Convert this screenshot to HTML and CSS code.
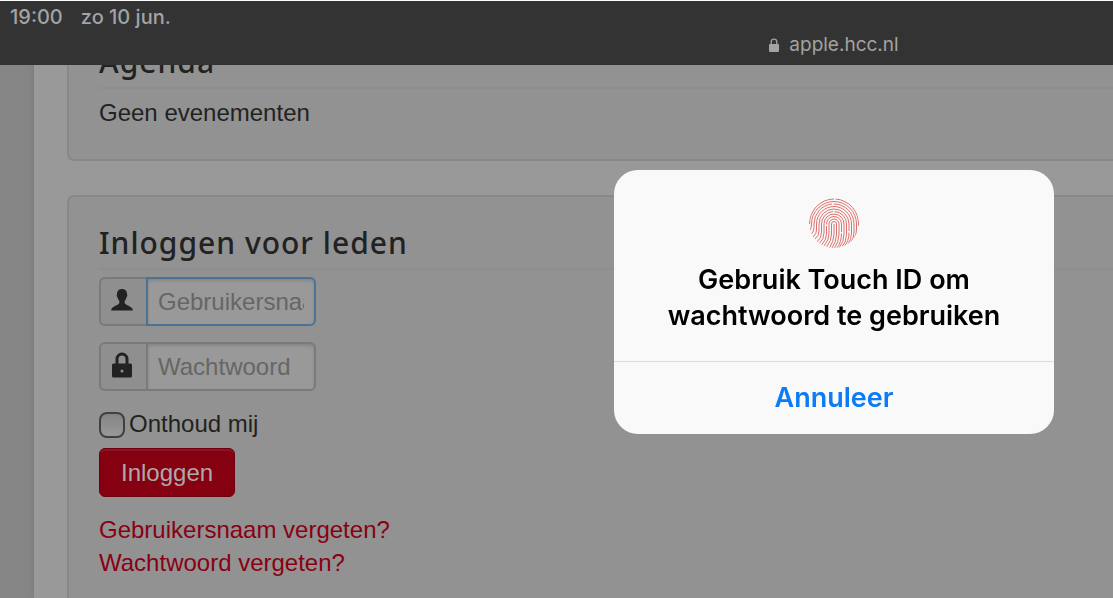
FILE: index.html
```html
<!DOCTYPE html>
<html lang="nl">
<head>
<meta charset="utf-8">
<meta name="viewport" content="width=device-width, initial-scale=1">
<title>Inloggen voor leden</title>
<link rel="stylesheet" href="styles.css">
</head>
<body>
<header class="topbar">
  <div class="status"><time>19:00</time><span>zo 10 jun.</span></div>
  <div class="address">
    <svg class="address-lock" viewBox="0 0 10 14" aria-hidden="true"><path d="M2.200 7V4a2.800 2.800 0 0 1 5.600 0v3" fill="none" stroke="currentColor" stroke-width="1.300"/><rect y="6" width="10" height="8" rx="1" fill="currentColor"/></svg>
    <span>apple.hcc.nl</span>
  </div>
</header>

<main class="page">
  <section class="panel">
    <h2 class="panel-title">Agenda</h2>
    <p class="text">Geen evenementen</p>
  </section>

  <section class="panel">
    <h2 class="panel-title">Inloggen voor leden</h2>
    <form class="login">
      <div class="field">
        <label class="addon" for="user" aria-label="Gebruikersnaam">
          <svg class="icon" viewBox="0 0 22 22" aria-hidden="true"><path d="M11 0C8 0 6 1.800 6 4.800c0 .8-.4 1-.3 1.800.1 1 .7 1.300.9 2.200.3 1.300.9 2.200 1.700 3v2.300C7.800 16.500 1 16.800 0 21.500h22c-1-4.700-7.800-5-8.300-7.400v-2.300c.8-.8 1.400-1.700 1.700-3 .2-.9.800-1.200.9-2.200.1-.8-.3-1-.3-1.800C16 1.800 14 0 11 0z" fill="currentColor"/></svg>
        </label>
        <input class="input input-focus" id="user" type="text" placeholder="Gebruikersnaam">
      </div>
      <div class="field">
        <label class="addon" for="pass" aria-label="Wachtwoord">
          <svg class="icon icon-lock" viewBox="0 0 20 26" aria-hidden="true"><path d="M5 13V7a5 5 0 0 1 10 0v6" fill="none" stroke="currentColor" stroke-width="3"/><path d="M1.500 11.500h17a1.500 1.500 0 0 1 1.500 1.500v11a1.500 1.500 0 0 1-1.500 1.500h-17A1.500 1.500 0 0 1 0 24V13a1.500 1.500 0 0 1 1.500-1.500zM10 17.500a1.500 1.500 0 1 0 0 3 1.500 1.500 0 0 0 0-3z" fill="currentColor" fill-rule="evenodd"/></svg>
        </label>
        <input class="input" id="pass" type="password" placeholder="Wachtwoord">
      </div>
      <div class="remember">
        <input class="check" id="remember" type="checkbox">
        <label for="remember">Onthoud mij</label>
      </div>
      <button class="submit" type="submit">Inloggen</button>
    </form>
    <ul class="links">
      <li><a href="#gebruikersnaam">Gebruikersnaam vergeten?</a></li>
      <li><a href="#wachtwoord">Wachtwoord vergeten?</a></li>
    </ul>
  </section>
</main>

<div class="overlay">
  <div class="dialog" role="alertdialog" aria-labelledby="dialog-title">
    <div class="dialog-body">
      <svg class="fingerprint" viewBox="0 0 50 50" aria-hidden="true">
        <defs><clipPath id="round"><circle cx="25" cy="25" r="25"/></clipPath></defs>
        <g clip-path="url(#round)" fill="none" stroke="#dc706c" stroke-width="1">
          <path d="M25 26v10q0 7-5 15"/>
          <path d="M17.500 49q5-6 5-13V26a2.500 2.500 0 0 1 5 0v10q0 8-5 15"/>
          <path d="M15 48q5-6 5-12V26a5 5 0 0 1 10 0v10q0 8-5 15"/>
          <path d="M12.500 47q5-5 5-11v-8M17.500 26.500V26a7.500 7.500 0 0 1 15 0v8M32.500 35.500q0 9-5 15"/>
          <path d="M10 46q5-5 5-11v-9a10 10 0 0 1 20 0v10q0 8-5 14"/>
          <path d="M8 44q4.500-4 4.500-10v-8A12.500 12.500 0 0 1 24 13.500M25.500 13.500A12.500 12.500 0 0 1 37.500 26v10q0 8-5 14"/>
          <path d="M6 41q4-3 4-8v-7a15 15 0 0 1 30 0v7M40 34.500q0 9-5 14"/>
          <path d="M4 39q3.500-3 3.500-7v-6A17.500 17.500 0 0 1 42.500 26v9q0 7-4 12"/>
          <path d="M2.500 36Q5 33 5 29.500V26A20 20 0 0 1 23 6M24.500 6A20 20 0 0 1 45 26v8q0 6-3 10"/>
          <path d="M1 32q1.500-2 1.500-6A22.500 22.500 0 0 1 47.500 26v5q0 5-2 9"/>
          <path d="M.5 26A24.500 25 0 0 1 25 1M26.500 1A24.500 25 0 0 1 49.500 28"/>
        </g>
      </svg>
      <h1 class="dialog-title" id="dialog-title">Gebruik Touch ID om wachtwoord te gebruiken</h1>
    </div>
    <button class="dialog-action" type="button">Annuleer</button>
  </div>
</div>
</body>
</html>
```
FILE: styles.css
```css
* {
  box-sizing: border-box;
}

body {
  margin: 0;
  height: 100vh;
  overflow: hidden;
  background: #868686;
  color: #222;
  font: 24px/33px "Liberation Sans", Arial, sans-serif;
}

.topbar {
  position: fixed;
  inset: 0 0 auto;
  z-index: 1;
  height: 65px;
  border-top: 1px solid #fff;
  background: #333;
  color: #a3a3a3;
  font: 19px/28px Inter, sans-serif;
}

.status {
  display: flex;
  gap: 18px;
  padding: 2px 10px 0;
  font-size: 20px;
  font-weight: 500;
}

.address {
  display: flex;
  align-items: center;
  justify-content: center;
  gap: 10px;
  width: 440px;
  margin: 0 59px 0 auto;
}

.address-lock {
  width: 10px;
  height: 14px;
}

.page {
  display: flex;
  flex-direction: column;
  gap: 34px;
  height: 100vh;
  overflow: hidden;
  margin-left: 34px;
  padding: 14px 0 0 33px;
  background: #999;
  box-shadow: 0 0 6px #777;
}

.panel {
  flex: none;
  padding: 30px;
  border: 2px solid #888;
  border-right: 0;
  border-radius: 7px 0 0 7px;
  background: #929292;
}

.panel-title {
  margin: 0 -30px 7px 0;
  padding-bottom: 9px;
  border-bottom: 2px solid #8e8e8e;
  font: 500 30px/32px "Noto Sans", sans-serif;
  letter-spacing: 1px;
}

.text {
  margin: 0;
}

.login {
  display: flex;
  flex-direction: column;
  align-items: flex-start;
}

.field {
  display: flex;
  width: 217px;
  height: 49px;
  margin-bottom: 16px;
}

.addon {
  display: flex;
  align-items: center;
  justify-content: center;
  width: 47px;
  padding: 0 4px 4px 0;
  border: 2px solid #7a7a7a;
  border-right: 0;
  border-radius: 6px 0 0 6px;
  background: #8f8f8f;
}

.icon {
  width: 22px;
  height: 22px;
}

.icon-lock {
  width: 20px;
  height: 26px;
}

.input {
  flex: 1;
  min-width: 0;
  padding: 0 10px;
  border: 2px solid #7a7a7a;
  border-radius: 0 6px 6px 0;
  background: #999;
  box-shadow: inset 0 2px 3px #868686;
  font: inherit;
}

.input::placeholder {
  color: #666;
}

.input-focus {
  border-color: #4a7396;
}

.remember {
  display: flex;
  align-items: center;
  gap: 4px;
  margin-bottom: 8px;
}

.check {
  appearance: none;
  width: 26px;
  height: 26px;
  margin: 2px 0 0;
  border: 2px solid #404040;
  border-radius: 8px;
  background: linear-gradient(#848484, #999);
}

.submit {
  height: 49px;
  margin-bottom: 16px;
  padding: 0 21px;
  border: 1px solid #6d000f;
  border-radius: 6px;
  background: #850010;
  box-shadow: inset 0 2px 1px #8c1523;
  color: #aaa;
  font: inherit;
}

.links {
  margin: 0;
  padding: 0;
  list-style: none;
}

.links a {
  color: #8a0013;
  text-decoration: none;
}

.overlay {
  position: fixed;
  inset: 0;
  z-index: 2;
  display: flex;
  align-items: flex-start;
  justify-content: flex-end;
  padding: 170px 59px 0 0;
}

.dialog {
  width: 440px;
  overflow: hidden;
  border-radius: 24px;
  background: #f9f9f9;
  color: #000;
  font-family: Inter, sans-serif;
}

.dialog-body {
  display: flex;
  flex-direction: column;
  align-items: center;
  padding: 28px 32px 27px;
}

.fingerprint {
  width: 50px;
  height: 50px;
  margin-bottom: 14px;
}

.dialog-title {
  margin: 0;
  font-size: 27px;
  font-weight: 600;
  line-height: 36px;
  text-align: center;
}

.dialog-action {
  width: 100%;
  height: 73px;
  padding: 0;
  border: 0;
  border-top: 1px solid #dcdce0;
  background: none;
  color: #0c7cf5;
  font: 600 27px/36px Inter, sans-serif;
}
```
